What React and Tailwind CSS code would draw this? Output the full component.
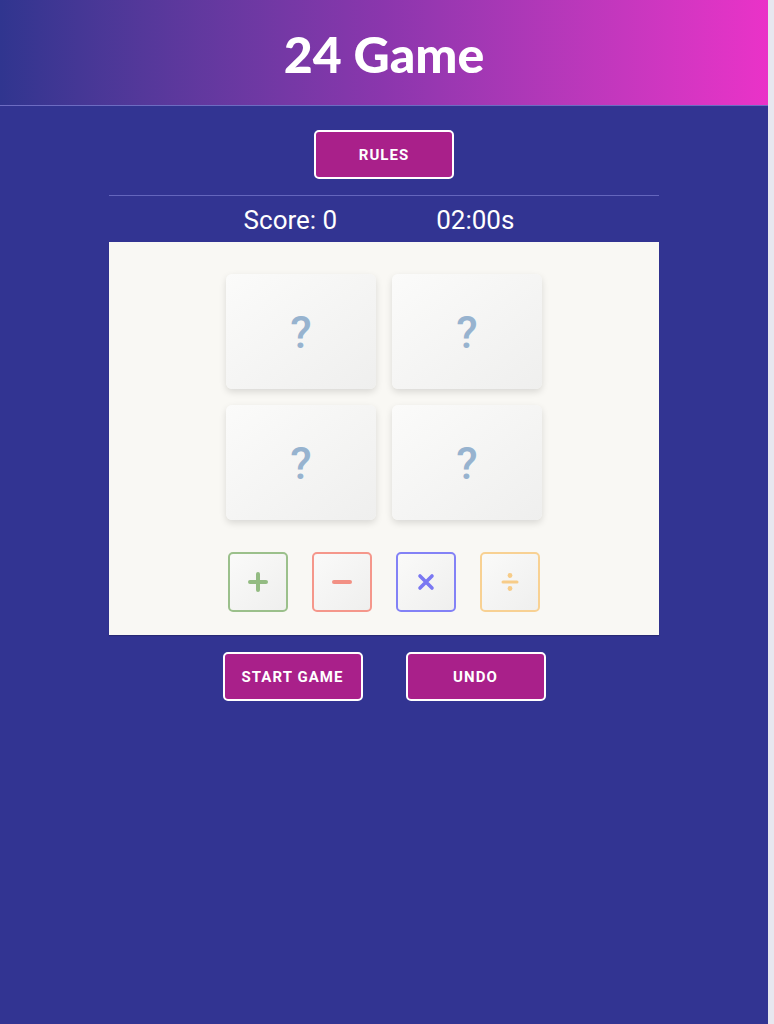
import { useState } from 'react';

const ops = [
  { key: 'add', border: 'border-[#9bc08b]', color: '#93bb82' },
  { key: 'sub', border: 'border-[#f5978b]', color: '#f29084' },
  { key: 'mul', border: 'border-[#8382f6]', color: '#7a78f2' },
  { key: 'div', border: 'border-[#f8d193]', color: '#f7cc88' },
];

const OpIcon = ({ type, color }) => {
  if (type === 'add') {
    return (
      <svg width="22" height="22" viewBox="0 0 22 22">
        <path d="M11 3v16M3 11h16" stroke={color} strokeWidth="4" strokeLinecap="round" />
      </svg>
    );
  }
  if (type === 'sub') {
    return (
      <svg width="22" height="22" viewBox="0 0 22 22">
        <path d="M3 11h16" stroke={color} strokeWidth="4" strokeLinecap="round" />
      </svg>
    );
  }
  if (type === 'mul') {
    return (
      <svg width="20" height="20" viewBox="0 0 20 20">
        <path d="M4 4l12 12M16 4L4 16" stroke={color} strokeWidth="3.6" strokeLinecap="round" />
      </svg>
    );
  }
  return (
    <svg width="22" height="22" viewBox="0 0 22 22">
      <path d="M4 11h14" stroke={color} strokeWidth="3" strokeLinecap="round" />
      <circle cx="11" cy="4.5" r="2.4" fill={color} />
      <circle cx="11" cy="17.5" r="2.4" fill={color} />
    </svg>
  );
};

const Button = ({ children, onClick }) => (
  <button
    onClick={onClick}
    className="w-[140px] h-[49px] bg-[#a9208a] border-2 border-white rounded-[5px] text-white text-[15px] font-bold tracking-[0.07em] uppercase pt-[2px]"
  >
    {children}
  </button>
);

const App = () => {
  const [score] = useState(0);
  const cards = ['?', '?', '?', '?'];

  return (
    <div className="min-h-screen flex bg-[#e7e7ef]" style={{ fontFamily: 'Roboto, "Liberation Sans", sans-serif' }}>
      <div className="w-[768px] min-h-screen bg-[#323492] flex flex-col">
        <header className="h-[106px] flex items-center justify-center bg-gradient-to-r from-[#30358f] via-[#8b36ad] to-[#ea32c8] border-b border-[#6d6cc2]">
          <h1 className="text-white text-[50px] font-black leading-none pt-[3px]" style={{ fontFamily: 'Lato, "Open Sans", sans-serif' }}>
            24 Game
          </h1>
        </header>

        <div className="flex flex-col items-center pt-[24px]">
          <Button>Rules</Button>

          <div className="w-[550px] mt-[16px] border-t border-[#6466bd]">
            <div className="h-[46px] flex items-center justify-center gap-[99px] text-white text-[26px] leading-none pt-[1px] pr-[10px]">
              <span>Score: {score}</span>
              <span>02:00s</span>
            </div>

            <div className="bg-[#f9f8f4] h-[393px] flex flex-col items-center pt-[32px] shadow-[0_1px_1px_rgba(0,0,0,0.2)]">
              <div className="grid grid-cols-2 gap-[16px]">
                {cards.map((c, i) => (
                  <div
                    key={i}
                    className="w-[150px] h-[115px] rounded-[6px] bg-gradient-to-br from-[#fbfbfa] to-[#efefee] shadow-[0_3px_7px_rgba(0,0,0,0.13)] flex items-center justify-center text-[#97b3cf] text-[44px] font-medium pt-[2px]"
                  >
                    {c}
                  </div>
                ))}
              </div>

              <div className="flex gap-[24px] mt-[32px]">
                {ops.map((op) => (
                  <button
                    key={op.key}
                    className={`w-[60px] h-[60px] rounded-[5px] border-2 ${op.border} bg-gradient-to-br from-[#fafaf9] to-[#efefee] flex items-center justify-center`}
                  >
                    <OpIcon type={op.key} color={op.color} />
                  </button>
                ))}
              </div>
            </div>
          </div>

          <div className="flex gap-[43px] mt-[17px]">
            <Button>Start Game</Button>
            <Button>Undo</Button>
          </div>
        </div>
      </div>
    </div>
  );
};

export default App;
